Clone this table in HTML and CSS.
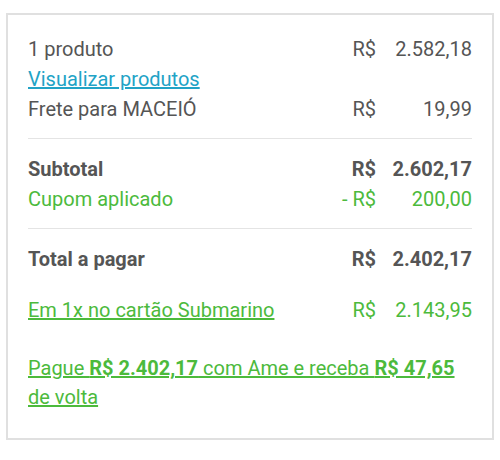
FILE: index.html
```html
<!DOCTYPE html>
<html lang="pt-BR">
<head>
  <meta charset="UTF-8" />
  <title>Resumo do pedido</title>
  <meta name="viewport" content="width=device-width, initial-scale=1.0" />
  <link rel="stylesheet" href="styles.css">
</head>
<body>
  <div class="summary">
    <div class="group">
      <div class="row">
        <span class="label">1 produto</span>
        <span class="cur">R$</span>
        <span class="val">2.582,18</span>
      </div>
      <div class="row">
        <a class="label link" href="#">Visualizar produtos</a>
      </div>
      <div class="row">
        <span class="label">Frete para MACEIÓ</span>
        <span class="cur">R$</span>
        <span class="val">19,99</span>
      </div>
    </div>

    <div class="group">
      <div class="row strong">
        <span class="label">Subtotal</span>
        <span class="cur">R$</span>
        <span class="val">2.602,17</span>
      </div>
      <div class="row green">
        <span class="label">Cupom aplicado</span>
        <span class="cur">- R$</span>
        <span class="val">200,00</span>
      </div>
    </div>

    <div class="group last">
      <div class="row strong">
        <span class="label">Total a pagar</span>
        <span class="cur">R$</span>
        <span class="val">2.402,17</span>
      </div>
      <div class="row green card-row">
        <a class="label green-link" href="#">Em 1x no cartão Submarino</a>
        <span class="cur">R$</span>
        <span class="val">2.143,95</span>
      </div>
      <p class="ame">
        <a class="green-link" href="#">Pague <b>R$ 2.402,17</b> com Ame e receba <b>R$ 47,65</b> de volta</a>
      </p>
    </div>
  </div>
</body>
</html>
```

FILE: styles.css
```css
body {
  margin: 0;
  padding: 13px 6px;
  font-family: Roboto, 'Liberation Sans', sans-serif;
  font-size: 20px;
  color: #555;
  background: #fff;
}

.summary {
  width: 488px;
  box-sizing: border-box;
  border: 2px solid #e0e0e0;
  padding: 19px 20px 26px 20px;
}

.group {
  padding-bottom: 14px;
  margin-bottom: 15px;
  border-bottom: 1px solid #e4e4e4;
}

.group.last {
  border-bottom: none;
  padding-bottom: 0;
  margin-bottom: 0;
}

.row {
  display: flex;
  align-items: center;
  height: 30px;
  line-height: 30px;
}

.label {
  flex: 1;
}

.cur {
  text-align: right;
}

.val {
  width: 96px;
  text-align: right;
}

.strong {
  font-weight: bold;
}

.green {
  color: #4cba3c;
}

.link {
  color: #22a3c6;
  text-decoration: underline;
}

.green-link {
  color: #4cba3c;
  text-decoration: underline;
}

.card-row {
  margin-top: 21px;
}

.ame {
  margin: 29px 0 0 0;
  line-height: 29px;
  color: #4cba3c;
}
```
